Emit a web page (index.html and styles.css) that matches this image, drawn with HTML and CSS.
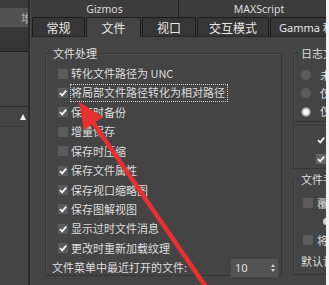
FILE: index.html
```html
<!DOCTYPE html>
<html lang="zh-CN">
<head>
<meta charset="utf-8">
<title>首选项设置</title>
<link rel="stylesheet" href="styles.css">
</head>
<body>
<div class="app">
  <aside class="side">
    <div class="side-top"></div>
    <div class="side-btn"><span>堆</span></div>
    <div class="side-dark"></div>
    <div class="side-gap"></div>
    <div class="side-roll"><span class="tri"></span></div>
    <div class="side-rest"></div>
  </aside>
  <div class="divider"></div>
  <main class="main">
    <div class="tabs1">
      <div class="t1 t1a">Gizmos</div>
      <div class="t1 t1b">MAXScript</div>
    </div>
    <div class="tabs2">
      <div class="tab w52">常规</div>
      <div class="tab sel w55">文件</div>
      <div class="tab w54">视口</div>
      <div class="tab w71">交互模式</div>
      <div class="tab w80">Gamma 和</div>
    </div>
    <div class="content">
      <div class="group gleft">
        <div class="gtitle">文件处理</div>
        <div class="rows">
          <div class="row"><span class="cb"></span><span class="lbl">转化文件路径为 UNC</span></div>
          <div class="row"><span class="cb on"><svg viewBox="0 0 10 10"><path d="M2 5.2 L4.2 7.4 L8.2 2.6" /></svg></span><span class="lbl focus">将局部文件路径转化为相对路径</span></div>
          <div class="row"><span class="cb on"><svg viewBox="0 0 10 10"><path d="M2 5.2 L4.2 7.4 L8.2 2.6" /></svg></span><span class="lbl">保存时备份</span></div>
          <div class="row"><span class="cb"></span><span class="lbl">增量保存</span></div>
          <div class="row"><span class="cb"></span><span class="lbl">保存时压缩</span></div>
          <div class="row"><span class="cb on"><svg viewBox="0 0 10 10"><path d="M2 5.2 L4.2 7.4 L8.2 2.6" /></svg></span><span class="lbl">保存文件属性</span></div>
          <div class="row"><span class="cb on"><svg viewBox="0 0 10 10"><path d="M2 5.2 L4.2 7.4 L8.2 2.6" /></svg></span><span class="lbl">保存视口缩略图</span></div>
          <div class="row"><span class="cb on"><svg viewBox="0 0 10 10"><path d="M2 5.2 L4.2 7.4 L8.2 2.6" /></svg></span><span class="lbl">保存图解视图</span></div>
          <div class="row"><span class="cb on"><svg viewBox="0 0 10 10"><path d="M2 5.2 L4.2 7.4 L8.2 2.6" /></svg></span><span class="lbl">显示过时文件消息</span></div>
          <div class="row"><span class="cb on"><svg viewBox="0 0 10 10"><path d="M2 5.2 L4.2 7.4 L8.2 2.6" /></svg></span><span class="lbl">更改时重新加载纹理</span></div>
          <div class="row last"><span class="lbl">文件菜单中最近打开的文件:</span>
            <div class="spin"><span>10</span><span class="arrows"><i class="up"></i><i class="dn"></i></span></div>
          </div>
        </div>
      </div>
      <div class="rcol">
        <div class="group glog">
          <div class="gtitle">日志文件维护</div>
          <div class="rrow"><span class="radio"></span><span class="lbl">未</span></div>
          <div class="rrow"><span class="radio"></span><span class="lbl">仅</span></div>
          <div class="rrow"><span class="radio on"></span><span class="lbl">仅</span></div>
        </div>
        <div class="box">
          <div class="brow"><span class="ck"><svg viewBox="0 0 10 10"><path d="M2 5.2 L4.2 7.4 L8.2 2.6" /></svg></span></div>
          <div class="brow"><span class="ck gray"><svg viewBox="0 0 10 10"><path d="M2 5.2 L4.2 7.4 L8.2 2.6" /></svg></span></div>
        </div>
        <div class="group gfile">
          <div class="gtitle">文件手动</div>
          <div class="frow"><span class="cb"></span><span class="lbl">覆</span></div>
          <div class="frow sub"><span class="radio small"></span></div>
          <div class="frow"><span class="cb"></span><span class="lbl">将</span></div>
          <div class="frow def"><span class="lbl">默认设</span></div>
        </div>
      </div>
    </div>
  </main>
  <div class="edge"></div>
  <svg class="arrow" viewBox="0 0 329 285" width="329" height="285">
    <line x1="208" y1="290" x2="90" y2="118" />
    <polygon points="79,102 103,117 84,130" />
  </svg>
</div>
</body>
</html>
```

FILE: styles.css
```css
* { box-sizing: border-box; }
html, body { margin: 0; padding: 0; }
body {
  width: 329px;
  height: 285px;
  overflow: hidden;
  background: #444444;
  color: #dedede;
  font-family: "Noto Sans CJK SC", "Noto Sans", sans-serif;
  font-size: 11px;
}
.app {
  position: relative;
  display: flex;
  width: 329px;
  height: 285px;
}
.side {
  width: 28px;
  display: flex;
  flex-direction: column;
  background: #444;
  overflow: hidden;
}
.side-top { height: 8px; background: #3b3b3b; }
.side-btn {
  height: 19px;
  background: #525252;
  display: flex;
  justify-content: flex-end;
  align-items: center;
  overflow: hidden;
}
.side-btn span {
  color: #b0b0b0;
  font-size: 11px;
  margin-right: -4px;
}
.side-dark {
  height: 25px;
  background: linear-gradient(#393939, #323232);
  border-bottom: 1px solid #1f1f1f;
}
.side-gap {
  height: 55px;
  background: #444;
  border-bottom: 1px solid #2c2c2c;
}
.side-roll {
  height: 20px;
  display: flex;
  justify-content: flex-end;
  align-items: center;
  padding-right: 2px;
  border-bottom: 1px solid #3a3a3a;
}
.tri {
  width: 0; height: 0;
  border-left: 3.5px solid transparent;
  border-right: 3.5px solid transparent;
  border-bottom: 6px solid #f2f2f2;
}
.side-rest { flex: 1; }
.divider {
  width: 3px;
  border-left: 2px solid #2a2a2a;
  background: #4a4a4a;
}
.main {
  width: 295px;
  display: flex;
  flex-direction: column;
  overflow: hidden;
  background: #3c3c3c;
}
.tabs1 {
  height: 18px;
  display: flex;
  flex-shrink: 0;
}
.t1 {
  display: flex;
  align-items: center;
  justify-content: center;
  font-family: "Noto Sans", sans-serif;
  font-size: 10.5px;
  color: #dcdcdc;
  background: #3c3c3c;
}
.t1a { width: 148px; border-right: 1px solid #222; flex-shrink: 0; }
.t1b { width: 160px; flex-shrink: 0; }
.tabs2 {
  height: 19px;
  display: flex;
  gap: 1px;
  align-items: flex-end;
  border-bottom: 1px solid #262626;
  flex-shrink: 0;
  padding-left: 1px;
}
.tab {
  height: 19px;
  flex-shrink: 0;
  display: flex;
  align-items: center;
  justify-content: center;
  background: #363636;
  border: 1px solid #1c1c1c;
  border-bottom: none;
  border-radius: 2px 2px 0 0;
  color: #e6e6e6;
  font-size: 12px;
  white-space: nowrap;
  overflow: hidden;
}
.tab.sel {
  background: #444;
  height: 20px;
  margin-bottom: -1px;
  position: relative;
}
.w52 { width: 53px; }
.w55 { width: 55px; }
.w54 { width: 54px; }
.w71 { width: 72px; }
.w80 { width: 80px; font-family: "Noto Sans", "Noto Sans CJK SC", sans-serif; font-size: 11px; justify-content: flex-start; padding-left: 8px; }
.content {
  flex: 1;
  background: #444;
  display: flex;
  padding: 16px 0 0 14px;
  gap: 11px;
}
.group {
  position: relative;
  border: 1px solid #363636;
  box-shadow: inset 1px 1px 0 #4c4c4c;
}
.gtitle {
  position: absolute;
  top: -8px;
  left: 6px;
  padding: 0 1px;
  background: #444;
  line-height: 14px;
  font-size: 11px;
  color: #dedede;
  white-space: nowrap;
}
.gleft {
  width: 237px;
  height: 223px;
  flex-shrink: 0;
}
.rows {
  display: flex;
  flex-direction: column;
  padding: 10px 0 0 12px;
}
.row {
  height: 19.4px;
  display: flex;
  align-items: center;
  gap: 3px;
}
.row.last {
  margin-left: -6px;
  justify-content: space-between;
  padding-right: 3px;
}
.cb {
  width: 10px;
  height: 10px;
  background: #5b5b5b;
  display: flex;
  flex-shrink: 0;
}
.cb svg, .ck svg { width: 10px; height: 10px; }
.cb path, .ck path {
  fill: none;
  stroke: #f4f4f4;
  stroke-width: 1.8;
}
.lbl {
  white-space: nowrap;
  line-height: 15px;
  color: #dedede;
}
.lbl.focus {
  outline: 1px dotted #cfcfcf;
  outline-offset: 0;
  padding: 0 2px 1px 0;
}
.spin {
  width: 47px;
  height: 18px;
  background: #535353;
  display: flex;
  align-items: center;
  justify-content: space-between;
  padding: 0 3px 0 4px;
  color: #e0e0e0;
  font-family: "Noto Sans", sans-serif;
  font-size: 11px;
}
.arrows {
  display: flex;
  flex-direction: column;
  gap: 2px;
}
.arrows i {
  width: 0; height: 0;
  border-left: 2.5px solid transparent;
  border-right: 2.5px solid transparent;
}
.arrows .up { border-bottom: 3px solid #cfcfcf; }
.arrows .dn { border-top: 3px solid #cfcfcf; }
.rcol {
  display: flex;
  flex-direction: column;
  width: 60px;
  flex-shrink: 0;
}
.glog {
  height: 69px;
  padding: 12px 0 0 7px;
  display: flex;
  flex-direction: column;
}
.rrow {
  height: 19.5px;
  display: flex;
  align-items: center;
  gap: 9px;
}
.radio {
  width: 10px;
  height: 10px;
  border-radius: 50%;
  background: #5c5c5c;
  flex-shrink: 0;
}
.radio.on {
  background: radial-gradient(circle, #ffffff 0 2px, #d8d8d8 3px, #6a6a6a 5px);
}
.radio.small { width: 7px; height: 7px; margin-left: 20px; background: #d0d0d0; }
.box {
  margin-top: 3px;
  height: 44px;
  border: 1px solid #363636;
  box-shadow: inset 1px 1px 0 #4c4c4c;
  display: flex;
  flex-direction: column;
  padding: 9px 0 0 22px;
  gap: 9px;
}
.brow { display: flex; height: 10px; }
.ck { width: 10px; height: 10px; display: flex; }
.ck.gray { background: #646464; }
.gfile {
  margin-top: 10px;
  height: 96px;
  padding: 13px 0 0 9px;
  display: flex;
  flex-direction: column;
}
.frow {
  display: flex;
  align-items: center;
  gap: 4px;
  height: 20px;
}
.frow.sub { height: 17px; }
.frow.def { margin-left: -2px; height: 22px; }
.edge {
  width: 3px;
  background: #f4f4f4;
}
.arrow {
  position: absolute;
  left: 0;
  top: 0;
  pointer-events: none;
}
.arrow line {
  stroke: #e8302e;
  stroke-width: 4.5;
}
.arrow polygon {
  fill: #e8302e;
}
```
